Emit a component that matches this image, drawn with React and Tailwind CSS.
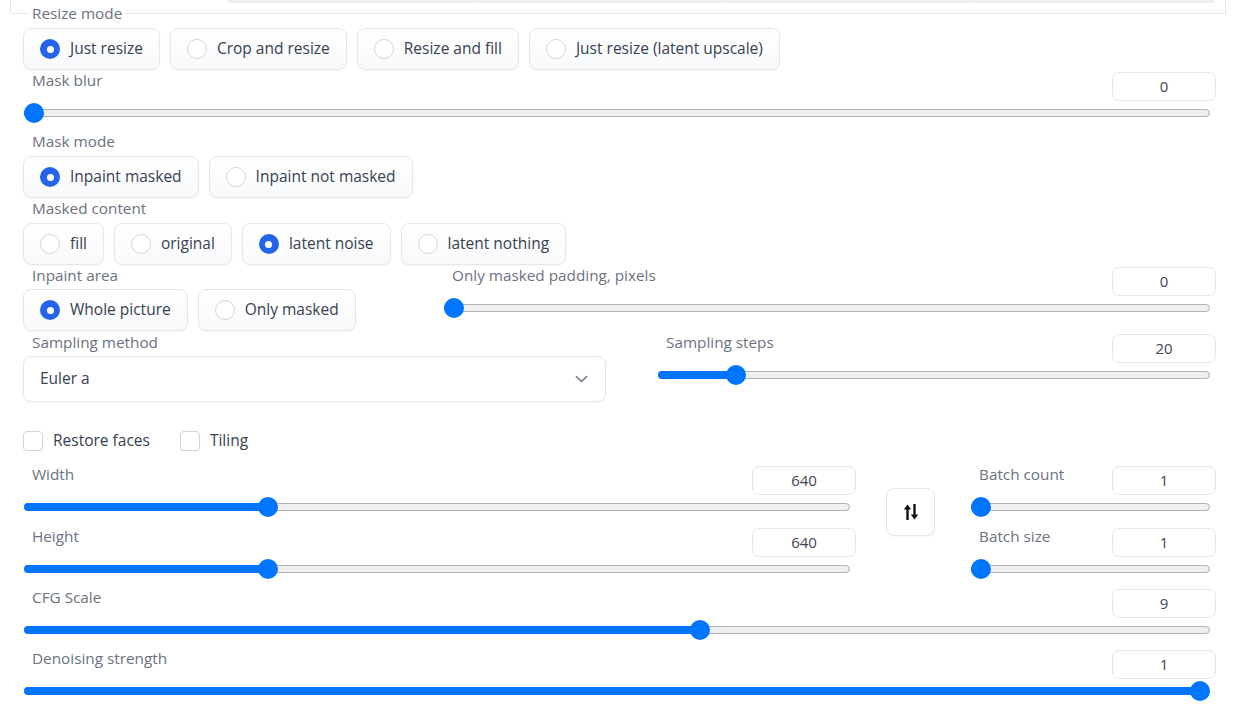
import React from 'react'

function Radio({ label, checked }) {
  return (
    <div className="flex items-center gap-[10px] h-[42px] pl-4 pr-4 rounded-lg border border-[#e5e7eb] bg-linear-to-b from-white to-[#f8f9fb] shadow-[0_1px_2px_rgba(0,0,0,0.04)] text-[#374151] text-[15.5px] whitespace-nowrap">
      {checked ? (
        <span className="w-5 h-5 rounded-full bg-[#2563eb] flex items-center justify-center">
          <span className="w-[7px] h-[7px] rounded-full bg-white" />
        </span>
      ) : (
        <span className="w-5 h-5 rounded-full border border-[#d1d5db] bg-white" />
      )}
      <span>{label}</span>
    </div>
  )
}

function RadioGroup({ options, checked, className = '' }) {
  return (
    <div className={'flex gap-[10px] ' + className}>
      {options.map(o => (
        <Radio key={o} label={o} checked={o === checked} />
      ))}
    </div>
  )
}

function Label({ children, className = '' }) {
  return <div className={'pl-[9px] leading-5 text-[15.3px] text-[#6b7280] whitespace-nowrap ' + className}>{children}</div>
}

function NumberBox({ value }) {
  return (
    <div className="w-[104px] h-[29px] shrink-0 rounded-[7px] border border-[#e5e7eb] bg-white flex items-center justify-center text-[#3f4654]">
      {value}
    </div>
  )
}

function Slider({ pct }) {
  // pct: 0..1, thumb centre runs from 10px to width-10px
  const pos = `calc(10px + (100% - 20px) * ${pct})`
  return (
    <div className="relative h-5 mt-[2px] ml-[1px] mr-[6px]">
      <div className="absolute inset-x-0 top-[6px] h-2 rounded-full bg-[#efefef] border border-[#b2b2b2]" />
      <div className="absolute left-0 top-[6px] h-2 rounded-full bg-[#0075ff]" style={{ width: pos }} />
      <div className="absolute top-0 w-5 h-5 -ml-[10px] rounded-full bg-[#0075ff]" style={{ left: pos }} />
    </div>
  )
}

function SliderBlock({ label, value, pct, className = '' }) {
  return (
    <div className={className}>
      <div className="flex justify-between h-[29px]">
        <Label className="-mt-[2px]">{label}</Label>
        <NumberBox value={value} />
      </div>
      <Slider pct={pct} />
    </div>
  )
}

function Checkbox({ label }) {
  return (
    <div className="flex items-center gap-[10px] h-5 text-[#374151] text-[15.5px]">
      <span className="w-5 h-5 rounded-[4px] border border-[#d1d5db] bg-white shadow-[0_1px_2px_rgba(0,0,0,0.04)]" />
      <span>{label}</span>
    </div>
  )
}

function SwapIcon() {
  return (
    <svg width="16" height="18" viewBox="0 0 16 18">
      <path d="M4.5 17V5" stroke="#111" strokeWidth="2.4" />
      <path d="M0.8 6.5 4.5 1.5 8.2 6.5Z" fill="#111" />
      <path d="M11.5 1V13" stroke="#111" strokeWidth="2.4" />
      <path d="M7.8 11.5 11.5 16.5 15.2 11.5Z" fill="#111" />
    </svg>
  )
}

export default function App() {
  return (
    <div className="w-[1236px] h-[710px] overflow-hidden bg-white font-['Open_Sans',Lato,sans-serif] text-[15px]">
      {/* bottom of the previous panel */}
      <div className="ml-[10px] w-[1216px] h-[14px] border-x border-b border-[#e5e7eb] pl-[217px]">
        <div className="flex w-[986px] h-[3px] bg-[#eceef2]">
          <div className="w-[247px] border-r border-[#f7f8fa]" />
          <div className="w-[246px] border-r border-[#f7f8fa]" />
          <div className="w-[248px] border-r border-[#f7f8fa]" />
          <div className="flex-1" />
        </div>
      </div>

      <div className="pl-[23px] pr-[20px]">
        <div className="-mt-[11px] ml-[5px] w-fit bg-white px-[4px] leading-5 text-[15.3px] text-[#6b7280]">Resize mode</div>
        <RadioGroup
          className="mt-[5px]"
          options={['Just resize', 'Crop and resize', 'Resize and fill', 'Just resize (latent upscale)']}
          checked="Just resize"
        />

        <SliderBlock className="mt-[2px]" label="Mask blur" value="0" pct={0} />

        <Label className="mt-[8px]">Mask mode</Label>
        <RadioGroup className="mt-[5px]" options={['Inpaint masked', 'Inpaint not masked']} checked="Inpaint masked" />

        <Label>Masked content</Label>
        <RadioGroup
          className="mt-[5px]"
          options={['fill', 'original', 'latent noise', 'latent nothing']}
          checked="latent noise"
        />

        <div className="flex">
          <div className="w-[420px]">
            <Label>Inpaint area</Label>
            <RadioGroup className="mt-[4px]" options={['Whole picture', 'Only masked']} checked="Whole picture" />
          </div>
          <SliderBlock className="flex-1 mt-[2px]" label="Only masked padding, pixels" value="0" pct={0} />
        </div>

        <div className="flex mt-[1px]">
          <div className="w-[583px]">
            <Label>Sampling method</Label>
            <div className="mt-[4px] h-[46px] rounded-lg border border-[#e5e7eb] bg-white shadow-[0_1px_2px_rgba(0,0,0,0.04)] flex items-center justify-between pl-4 pr-[17px] text-[15.5px] text-[#374151]">
              <span>Euler a</span>
              <svg width="13" height="8" viewBox="0 0 13 8">
                <path d="M1 1.2 6.5 6.5 12 1.2" fill="none" stroke="#6b7280" strokeWidth="1.5" />
              </svg>
            </div>
          </div>
          <SliderBlock className="flex-1 ml-[51px] mt-[2px]" label="Sampling steps" value="20" pct={0.1275} />
        </div>

        <div className="flex gap-[30px] mt-[29px]">
          <Checkbox label="Restore faces" />
          <Checkbox label="Tiling" />
        </div>

        <div className="flex mt-[15px]">
          <div className="w-[833px]">
            <SliderBlock label="Width" value="640" pct={0.29} />
            <SliderBlock className="mt-[11px]" label="Height" value="640" pct={0.29} />
          </div>
          <div className="ml-[30px] mt-[22px] w-[49px] h-[48px] rounded-lg border border-[#e5e7eb] bg-white shadow-[0_1px_2px_rgba(0,0,0,0.04)] flex items-center justify-center">
            <SwapIcon />
          </div>
          <div className="ml-[35px] flex-1">
            <SliderBlock label="Batch count" value="1" pct={0} />
            <SliderBlock className="mt-[11px]" label="Batch size" value="1" pct={0} />
          </div>
        </div>

        <SliderBlock className="mt-[10px]" label="CFG Scale" value="9" pct={0.571} />
        <SliderBlock className="mt-[10px]" label="Denoising strength" value="1" pct={1} />
      </div>
    </div>
  )
}
